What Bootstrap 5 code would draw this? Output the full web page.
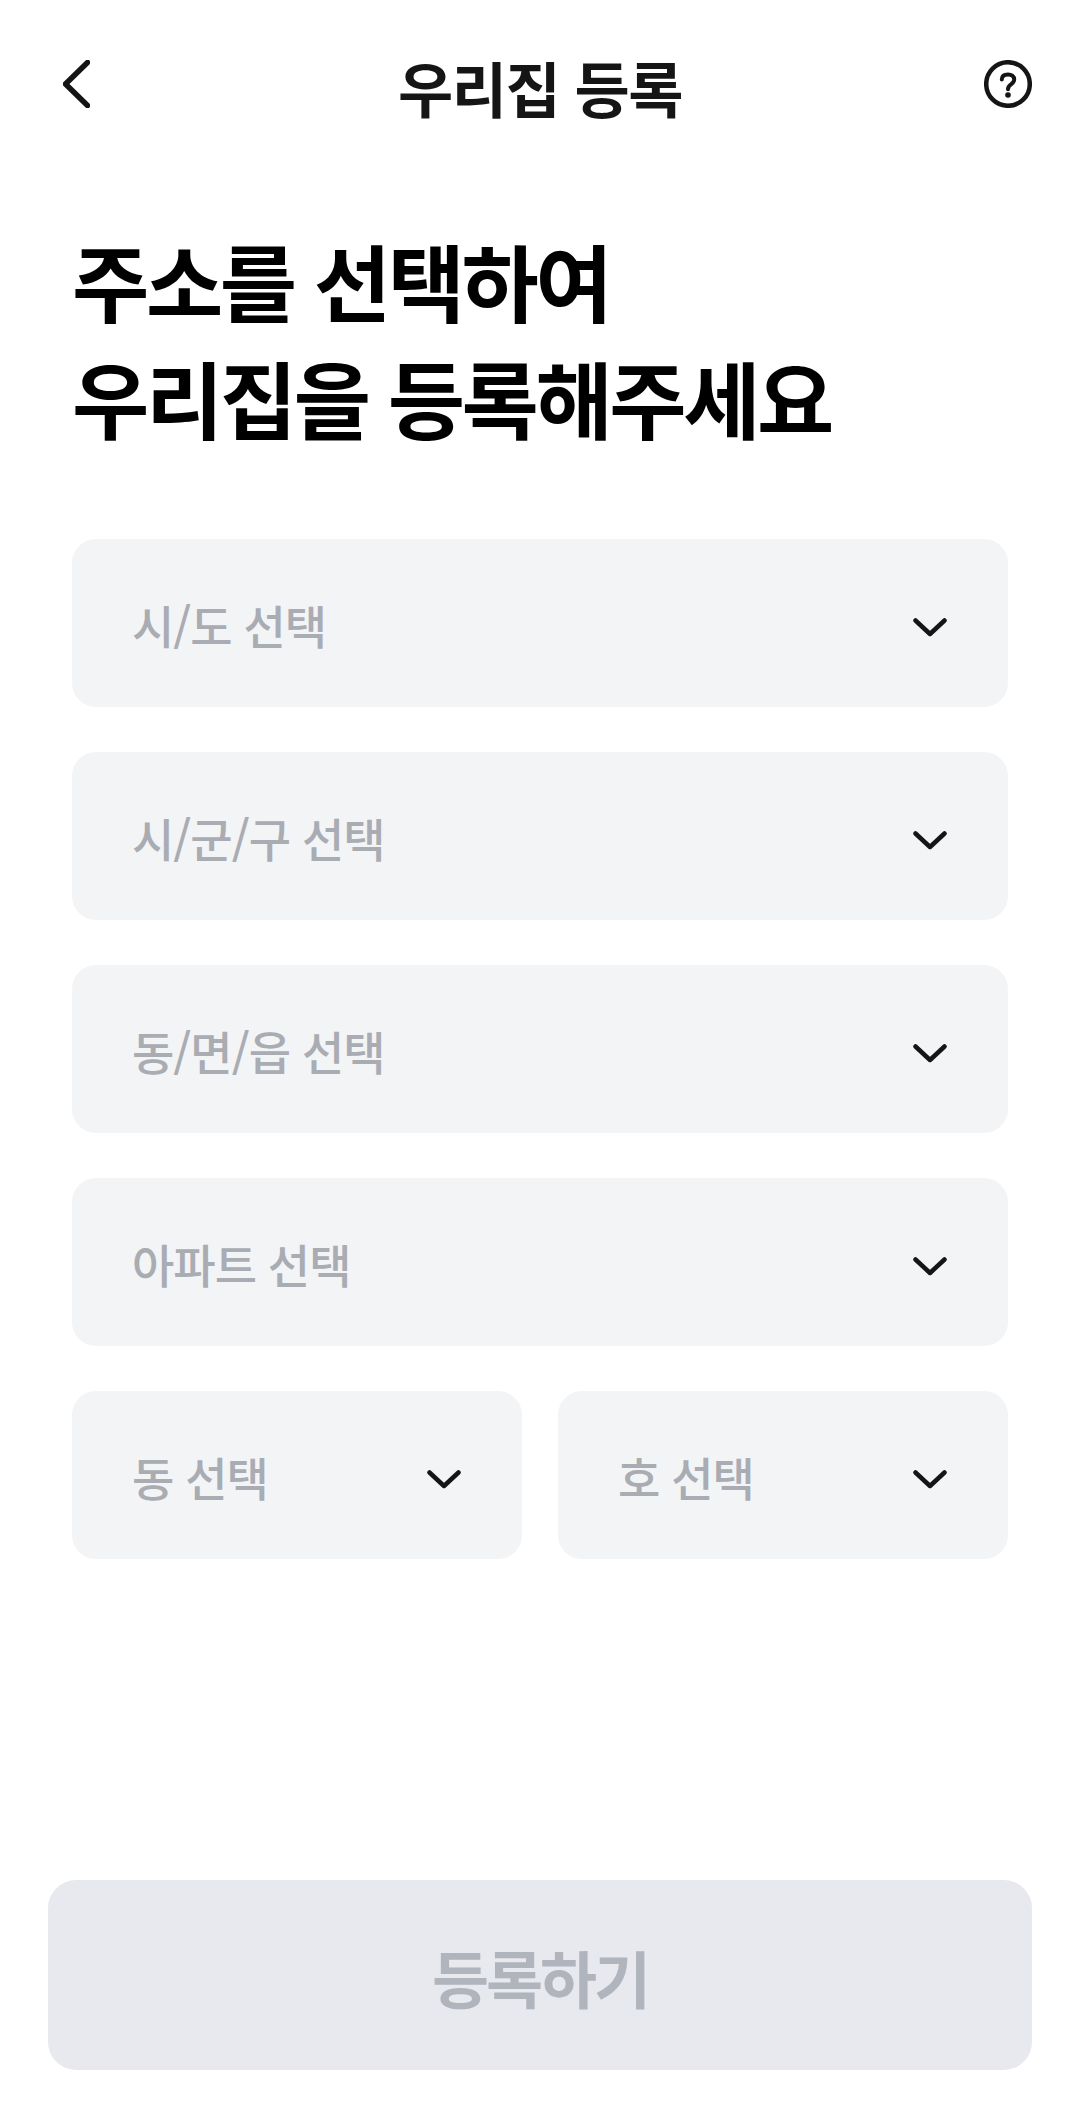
<!DOCTYPE html>
<html lang="ko">
<head>
<meta charset="utf-8">
<title>우리집 등록</title>
<link href="https://cdn.jsdelivr.net/npm/bootstrap@5.3.0/dist/css/bootstrap.min.css" rel="stylesheet">
<style>
html,body{margin:0;background:#fff;}
body{font-family:"Noto Sans CJK KR","Liberation Sans",sans-serif;color:#111;}
.screen{height:2124px;width:1080px;}
.topbar{padding:60px 48px 0 48px;height:221px;align-items:flex-start;}
.side-slot{flex:1 1 0;}
.back-icon{margin-left:15px;}
.top-title{font-size:60px;font-weight:600;line-height:54px;margin:0;letter-spacing:-1.5px;color:#151515;}
.headline{margin:0 72px 84px;font-size:84px;font-weight:700;line-height:117px;letter-spacing:-3.4px;color:#000;}
.fields{padding:0 72px;gap:45px;}
.pair{gap:36px;}
.pick{height:168px;background:#f3f4f6;border:0;border-radius:24px;padding:0 60px;font-size:46px;font-weight:500;letter-spacing:-1px;color:#a9acb2;line-height:1;}
.pick span{margin-top:2px;}
.pick svg{width:34px;height:19px;flex:none;margin-top:8px;margin-right:1px;}
.pair .pick{width:450px;}
.foot{padding:0 48px;margin-top:auto;margin-bottom:54px;}
.submit{height:190px;width:984px;border-radius:28px;background:#e8e9ee;color:#b0b4bc;font-size:62px;font-weight:700;letter-spacing:-3px;border:0;padding:4px 0 0;}
.submit:disabled{background:#e8e9ee;color:#b0b4bc;opacity:1;border:0;}
</style>
</head>
<body>
<div class="screen d-flex flex-column">
  <header class="topbar d-flex">
    <div class="side-slot">
      <svg class="back-icon" width="27" height="48" viewBox="0 0 27 48" fill="none" stroke="#151515" stroke-width="5.5" stroke-linecap="round" stroke-linejoin="round"><path d="M24.5 2.5L2.5 24L24.5 45.5"/></svg>
    </div>
    <h1 class="top-title">우리집 등록</h1>
    <div class="side-slot d-flex justify-content-end">
      <svg width="48" height="48" viewBox="0 0 48 48" fill="none" stroke="#151515" stroke-width="4.5" stroke-linecap="round"><circle cx="24" cy="24" r="21.8"/><path d="M17.8 19.5C17.8 16 20.5 14.5 24 14.5C27.8 14.5 30.2 16.5 30.2 19.5C30.2 21.8 28.8 23 27 24.3C25 25.7 24 26.8 24 29.3" stroke-width="4"/><circle cx="24" cy="35" r="2.8" fill="#151515" stroke="none"/></svg>
    </div>
  </header>
  <h2 class="headline">주소를 선택하여<br>우리집을 등록해주세요</h2>
  <div class="fields d-flex flex-column">
    <button type="button" class="pick d-flex align-items-center justify-content-between w-100"><span>시/도 선택</span><svg viewBox="0 0 34 19" fill="none" stroke="#151515" stroke-width="4.5" stroke-linecap="round" stroke-linejoin="round"><path d="M2.5 2.5L17 16L31.5 2.5"/></svg></button>
    <button type="button" class="pick d-flex align-items-center justify-content-between w-100"><span>시/군/구 선택</span><svg viewBox="0 0 34 19" fill="none" stroke="#151515" stroke-width="4.5" stroke-linecap="round" stroke-linejoin="round"><path d="M2.5 2.5L17 16L31.5 2.5"/></svg></button>
    <button type="button" class="pick d-flex align-items-center justify-content-between w-100"><span>동/면/읍 선택</span><svg viewBox="0 0 34 19" fill="none" stroke="#151515" stroke-width="4.5" stroke-linecap="round" stroke-linejoin="round"><path d="M2.5 2.5L17 16L31.5 2.5"/></svg></button>
    <button type="button" class="pick d-flex align-items-center justify-content-between w-100"><span>아파트 선택</span><svg viewBox="0 0 34 19" fill="none" stroke="#151515" stroke-width="4.5" stroke-linecap="round" stroke-linejoin="round"><path d="M2.5 2.5L17 16L31.5 2.5"/></svg></button>
    <div class="pair d-flex">
      <button type="button" class="pick d-flex align-items-center justify-content-between"><span>동 선택</span><svg viewBox="0 0 34 19" fill="none" stroke="#151515" stroke-width="4.5" stroke-linecap="round" stroke-linejoin="round"><path d="M2.5 2.5L17 16L31.5 2.5"/></svg></button>
      <button type="button" class="pick d-flex align-items-center justify-content-between"><span>호 선택</span><svg viewBox="0 0 34 19" fill="none" stroke="#151515" stroke-width="4.5" stroke-linecap="round" stroke-linejoin="round"><path d="M2.5 2.5L17 16L31.5 2.5"/></svg></button>
    </div>
  </div>
  <div class="foot">
    <button type="button" class="btn submit" disabled>등록하기</button>
  </div>
</div>
<script src="https://cdn.jsdelivr.net/npm/bootstrap@5.3.0/dist/js/bootstrap.bundle.min.js"></script>
</body>
</html>
